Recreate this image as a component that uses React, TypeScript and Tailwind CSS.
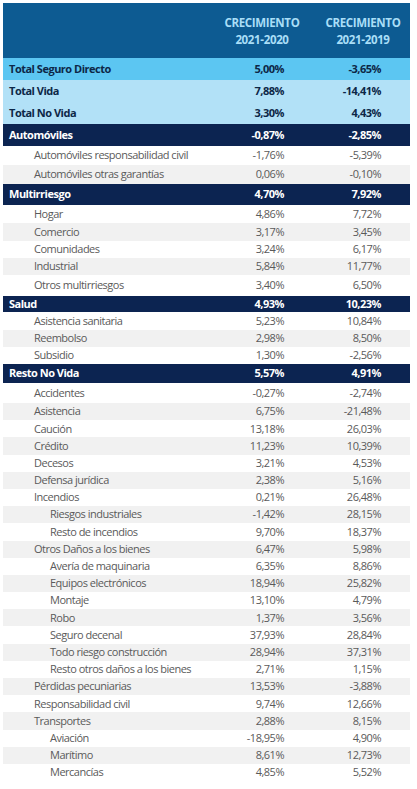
type Row = {
  label: string;
  a: string;
  b: string;
  kind: "total" | "totalLight" | "cat" | "sub";
  level?: 1 | 2;
  h: number;
};

const rows: Row[] = [
  { label: "Total Seguro Directo", a: "5,00%", b: "-3,65%", kind: "total", h: 22 },
  { label: "Total Vida", a: "7,88%", b: "-14,41%", kind: "totalLight", h: 22 },
  { label: "Total No Vida", a: "3,30%", b: "4,43%", kind: "totalLight", h: 22 },
  { label: "Automóviles", a: "-0,87%", b: "-2,85%", kind: "cat", h: 22 },
  { label: "Automóviles responsabilidad civil", a: "-1,76%", b: "-5,39%", kind: "sub", level: 1, h: 19 },
  { label: "Automóviles otras garantías", a: "0,06%", b: "-0,10%", kind: "sub", level: 1, h: 19 },
  { label: "Multirriesgo", a: "4,70%", b: "7,92%", kind: "cat", h: 21 },
  { label: "Hogar", a: "4,86%", b: "7,72%", kind: "sub", level: 1, h: 18 },
  { label: "Comercio", a: "3,17%", b: "3,45%", kind: "sub", level: 1, h: 18 },
  { label: "Comunidades", a: "3,24%", b: "6,17%", kind: "sub", level: 1, h: 17 },
  { label: "Industrial", a: "5,84%", b: "11,77%", kind: "sub", level: 1, h: 17 },
  { label: "Otros multirriesgos", a: "3,40%", b: "6,50%", kind: "sub", level: 1, h: 21 },
  { label: "Salud", a: "4,93%", b: "10,23%", kind: "cat", h: 16 },
  { label: "Asistencia sanitaria", a: "5,23%", b: "10,84%", kind: "sub", level: 1, h: 18 },
  { label: "Reembolso", a: "2,98%", b: "8,50%", kind: "sub", level: 1, h: 17 },
  { label: "Subsidio", a: "1,30%", b: "-2,56%", kind: "sub", level: 1, h: 17 },
  { label: "Resto No Vida", a: "5,57%", b: "4,91%", kind: "cat", h: 19 },
  { label: "Accidentes", a: "-0,27%", b: "-2,74%", kind: "sub", level: 1, h: 20 },
  { label: "Asistencia", a: "6,75%", b: "-21,48%", kind: "sub", level: 1, h: 17.2 },
  { label: "Caución", a: "13,18%", b: "26,03%", kind: "sub", level: 1, h: 17.2 },
  { label: "Crédito", a: "11,23%", b: "10,39%", kind: "sub", level: 1, h: 17.2 },
  { label: "Decesos", a: "3,21%", b: "4,53%", kind: "sub", level: 1, h: 17.2 },
  { label: "Defensa jurídica", a: "2,38%", b: "5,16%", kind: "sub", level: 1, h: 17.2 },
  { label: "Incendios", a: "0,21%", b: "26,48%", kind: "sub", level: 1, h: 17.2 },
  { label: "Riesgos industriales", a: "-1,42%", b: "28,15%", kind: "sub", level: 2, h: 17.2 },
  { label: "Resto de incendios", a: "9,70%", b: "18,37%", kind: "sub", level: 2, h: 17.2 },
  { label: "Otros Daños a los bienes", a: "6,47%", b: "5,98%", kind: "sub", level: 1, h: 17.2 },
  { label: "Avería de maquinaria", a: "6,35%", b: "8,86%", kind: "sub", level: 2, h: 17.2 },
  { label: "Equipos electrónicos", a: "18,94%", b: "25,82%", kind: "sub", level: 2, h: 17.2 },
  { label: "Montaje", a: "13,10%", b: "4,79%", kind: "sub", level: 2, h: 17.2 },
  { label: "Robo", a: "1,37%", b: "3,56%", kind: "sub", level: 2, h: 17.2 },
  { label: "Seguro decenal", a: "37,93%", b: "28,84%", kind: "sub", level: 2, h: 17.2 },
  { label: "Todo riesgo construcción", a: "28,94%", b: "37,31%", kind: "sub", level: 2, h: 17.2 },
  { label: "Resto otros daños a los bienes", a: "2,71%", b: "1,15%", kind: "sub", level: 2, h: 17.2 },
  { label: "Pérdidas pecuniarias", a: "13,53%", b: "-3,88%", kind: "sub", level: 1, h: 17.2 },
  { label: "Responsabilidad civil", a: "9,74%", b: "12,66%", kind: "sub", level: 1, h: 17.2 },
  { label: "Transportes", a: "2,88%", b: "8,15%", kind: "sub", level: 1, h: 17.2 },
  { label: "Aviación", a: "-18,95%", b: "4,90%", kind: "sub", level: 2, h: 17.2 },
  { label: "Marítimo", a: "8,61%", b: "12,73%", kind: "sub", level: 2, h: 17.2 },
  { label: "Mercancías", a: "4,85%", b: "5,52%", kind: "sub", level: 2, h: 17.2 },
];

const TableRow = ({ row, stripe }: { row: Row; stripe: boolean }) => {
  let bg = "bg-white";
  let text = "text-[#5a5a5a] font-normal";
  if (row.kind === "total") {
    bg = "bg-[#5cc6f2]";
    text = "text-[#0d2747] font-bold";
  } else if (row.kind === "totalLight") {
    bg = "bg-[#b2e1f7]";
    text = "text-[#0d2747] font-bold";
  } else if (row.kind === "cat") {
    bg = "bg-[#0c2451]";
    text = "text-white font-bold";
  } else if (stripe) {
    bg = "bg-[#f1f1f1]";
  }
  const pad = row.kind !== "sub" ? "pl-[6px]" : row.level === 2 ? "pl-[47px]" : "pl-[31px]";

  return (
    <div className={`flex items-center ${bg} ${text} text-[11px] tracking-[-0.045em]`} style={{ height: row.h }}>
      <div className={`flex-1 whitespace-nowrap ${pad}`}>{row.label}</div>
      <div className="w-[80px] text-right pr-[18px]">{row.a}</div>
      <div className="w-[20px]" />
      <div className="w-[82px] text-right pr-[23px]">{row.b}</div>
      <div className="w-[6px]" />
    </div>
  );
};

export default function App() {
  let sub = 0;
  return (
    <div className="w-[417px] h-[789px] bg-white pt-[3px] pl-[3px] pr-[7px] overflow-hidden" style={{ fontFamily: '"Open Sans", "Noto Sans", sans-serif' }}>
      <div className="flex flex-col">
        <div className="flex items-center h-[55px] bg-[#0d5b92] text-[#a9def7] font-bold text-[11.5px] leading-[17px] tracking-[-0.03em] text-center">
          <div className="flex-1" />
          <div className="w-[80px] flex flex-col items-center">
            <span>CRECIMIENTO</span>
            <span>2021-2020</span>
          </div>
          <div className="w-[20px]" />
          <div className="w-[82px] flex flex-col items-center">
            <span>CRECIMIENTO</span>
            <span>2021-2019</span>
          </div>
          <div className="w-[6px]" />
        </div>
        {rows.map((r) => {
          if (r.kind !== "sub") {
            sub = 0;
            return <TableRow key={r.label} row={r} stripe={false} />;
          }
          const stripe = sub % 2 === 1;
          sub += 1;
          return <TableRow key={r.label} row={r} stripe={stripe} />;
        })}
      </div>
    </div>
  );
}
